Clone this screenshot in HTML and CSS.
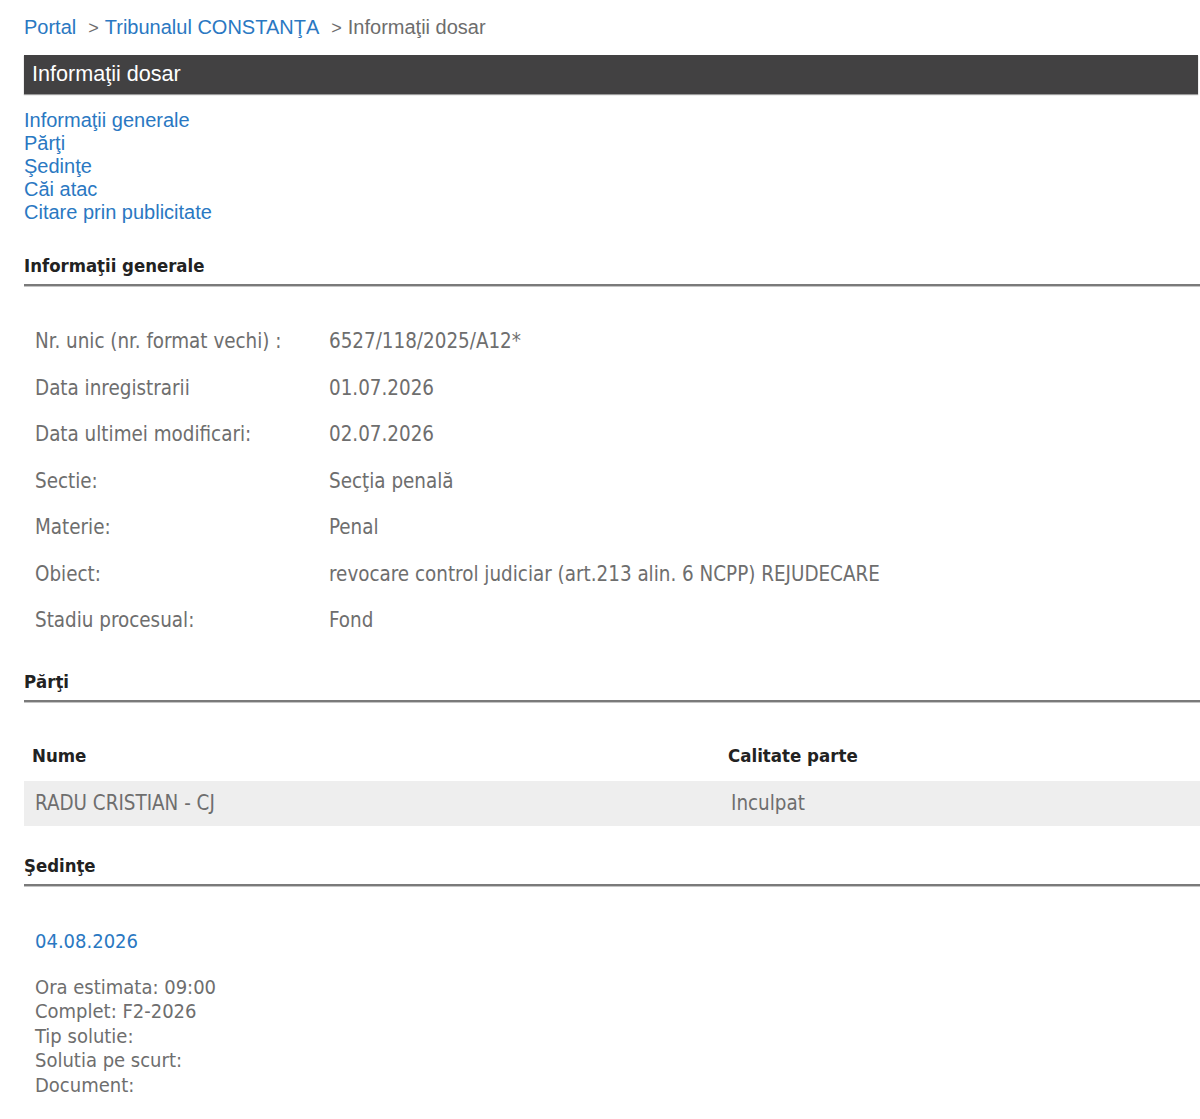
FILE: index.html
```html
<!DOCTYPE html>
<html lang="ro">
<head>
<meta charset="utf-8">
<title>Informaţii dosar</title>
<link rel="stylesheet" href="styles.css">
</head>
<body>
<div class="page">
  <div class="breadcrumb">
    <a href="#">Portal</a><span class="sep">&gt;</span><a href="#">Tribunalul CONSTANŢA</a><span class="sep">&gt;</span><span class="current">Informaţii dosar</span>
  </div>
  <div class="titlebar">Informaţii dosar</div>
  <ul class="toc">
    <li><a href="#">Informaţii generale</a></li>
    <li><a href="#">Părţi</a></li>
    <li><a href="#">Şedinţe</a></li>
    <li><a href="#">Căi atac</a></li>
    <li><a href="#">Citare prin publicitate</a></li>
  </ul>

  <h2 class="section-title">Informaţii generale</h2>
  <div class="info">
    <div class="row"><span class="label">Nr. unic (nr. format vechi) :</span><span class="value">6527/118/2025/A12*</span></div>
    <div class="row"><span class="label">Data inregistrarii</span><span class="value">01.07.2026</span></div>
    <div class="row"><span class="label">Data ultimei modificari:</span><span class="value">02.07.2026</span></div>
    <div class="row"><span class="label">Sectie:</span><span class="value">Secţia penală</span></div>
    <div class="row"><span class="label">Materie:</span><span class="value">Penal</span></div>
    <div class="row"><span class="label">Obiect:</span><span class="value">revocare control judiciar (art.213 alin. 6 NCPP) REJUDECARE</span></div>
    <div class="row"><span class="label">Stadiu procesual:</span><span class="value">Fond</span></div>
  </div>

  <h2 class="section-title sec-parti">Părţi</h2>
  <div class="parties">
    <div class="thead"><span class="c1">Nume</span><span class="c2">Calitate parte</span></div>
    <div class="trow"><span class="c1">RADU CRISTIAN - CJ</span><span class="c2">Inculpat</span></div>
  </div>

  <h2 class="section-title sec-sed">Şedinţe</h2>
  <div class="hearing">
    <div class="hdate">04.08.2026</div>
    <div class="hdetails">
      <div>Ora estimata: 09:00</div>
      <div>Complet: F2-2026</div>
      <div>Tip solutie:</div>
      <div>Solutia pe scurt:</div>
      <div>Document:</div>
    </div>
  </div>
</div>
</body>
</html>
```

FILE: styles.css
```css
html, body {
  margin: 0;
  padding: 0;
  background: #ffffff;
}
.page {
  padding: 14px 0 0 24px;
  font-family: "DejaVu Sans Condensed", "DejaVu Sans", sans-serif;
  color: #6e6e6e;
}
a {
  color: #2a78c2;
  text-decoration: none;
}
.breadcrumb {
  font-family: "Liberation Sans", Arial, sans-serif;
  font-size: 20px;
  line-height: 26px;
  color: #6d6d6d;
}
.breadcrumb .sep {
  margin: 0 6px 0 12px;
  font-size: 18px;
}
.titlebar {
  margin-top: 14px;
  margin-right: 2px;
  height: 39px;
  line-height: 37px;
  background: #424142;
  color: #ffffff;
  font-family: "Liberation Sans", Arial, sans-serif;
  font-size: 21.6px;
  padding-left: 8px;
  box-shadow: 0 1px 1px #9a9a9a;
}
.toc {
  list-style: none;
  margin: 15px 0 0 0;
  padding: 0;
  font-family: "Liberation Sans", Arial, sans-serif;
  font-size: 20px;
  line-height: 23px;
}
.section-title {
  margin: 30px 0 0 0;
  padding: 0 0 6px 0;
  font-size: 18.4px;
  font-weight: bold;
  color: #222222;
  line-height: 24px;
  border-bottom: 2px solid #7a7a7a;
  box-shadow: 0 1px 0 #c4c4c4;
}
.info {
  padding: 32px 0 0 11px;
}
.row {
  display: flex;
  height: 46.5px;
  align-items: center;
  font-size: 20.4px;
}
.label {
  width: 294px;
  flex: none;
}
.sec-parti {
  margin-top: 26px;
}
.parties {
  margin-top: 28px;
  font-size: 20.4px;
}
.thead, .trow {
  display: flex;
  align-items: center;
}
.thead {
  height: 51px;
  font-weight: bold;
  font-size: 18.5px;
  color: #222222;
  padding-left: 8px;
}
.thead .c1 { width: 696px; }
.trow {
  height: 45px;
  background: #eeeeee;
  padding-left: 11px;
}
.trow .c1 { width: 696px; }
.sec-sed {
  margin-top: 28px;
}
.hearing {
  padding: 42px 0 0 11px;
  font-size: 20px;
}
.hdate {
  color: #2a78c2;
  line-height: 26px;
}
.hdetails {
  margin-top: 21px;
  line-height: 24.5px;
}
```
